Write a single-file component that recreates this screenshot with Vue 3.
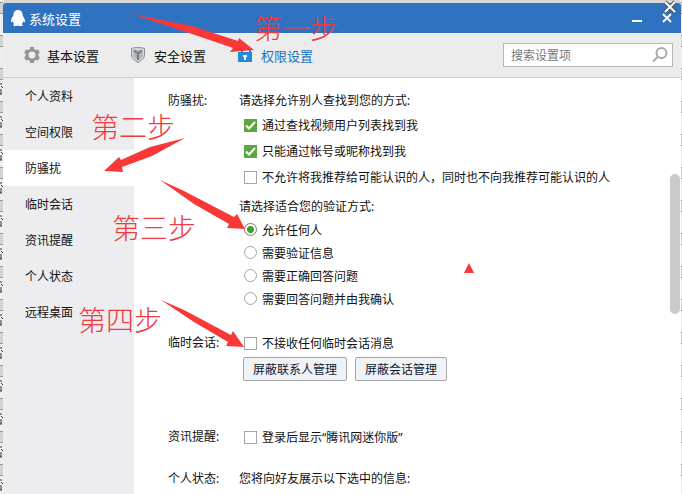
<template>
  <div class="desktop">
    <main class="window">
      <header class="titlebar">
        <svg class="logo" viewBox="0 0 16 18" aria-hidden="true">
          <path d="M8 1C4.800 1 3.400 3.300 3.400 6.200C2.500 7.900 .8 10.200 .9 12.600C1 13.900 1.900 13.200 2.600 12.300C2.900 13.500 3.500 14.300 4.200 14.900C3.300 15.200 2.900 16.500 4 16.900C5.400 17.300 7.200 17 8 16.400C8.800 17 10.600 17.300 12 16.900C13.100 16.500 12.700 15.200 11.800 14.900C12.500 14.300 13.100 13.500 13.400 12.300C14.100 13.200 15 13.900 15.100 12.600C15.200 10.200 13.500 7.900 12.600 6.200C12.600 3.300 11.200 1 8 1Z" />
        </svg>
        <h1 class="title">系统设置</h1>
        <button class="win-btn" type="button" aria-label="最小化">
          <svg viewBox="0 0 12 12"><path d="M1 9H11" stroke-width="2" /></svg>
        </button>
        <button class="win-btn" type="button" aria-label="关闭">
          <svg viewBox="0 0 12 12"><path d="M2 2L10 10M10 2L2 10" stroke-width="2" /></svg>
        </button>
      </header>

      <nav class="toolbar">
        <button class="tab" type="button">
          <svg class="tab-icon" viewBox="0 0 18 18" aria-hidden="true">
            <g fill="none" stroke="#8f9499">
              <circle cx="9" cy="9" r="5" stroke-width="3" />
              <path d="M9 1V4M9 14V17M2.100 5L4.600 6.500M13.400 11.500L15.900 13M2.100 13L4.600 11.500M13.400 6.500L15.900 5" stroke-width="4" />
            </g>
          </svg>
          基本设置
        </button>
        <button class="tab" type="button">
          <svg class="tab-icon" viewBox="0 0 18 18" aria-hidden="true">
            <path d="M1.500 2.500Q3.500 1.500 8 1.500Q12.500 1.500 14.500 2.500V9Q14.500 13 8 16.500Q1.500 13 1.500 9Z" fill="#d3d6d8" stroke="#8b8f93" />
            <path d="M3.500 4H12.500V9.500Q12 12 8 14.500Q4 12 3.500 9.500Z" fill="#b0b4b7" />
            <path d="M4 4.500L8 7.500L12 4.500M8 7.500V14" fill="none" stroke="#777c80" stroke-width="2" />
          </svg>
          安全设置
        </button>
        <button class="tab active" type="button">
          <svg class="tab-icon" viewBox="0 0 18 18" aria-hidden="true">
            <path d="M5 7V5Q5 2 9 2Q13 2 13 5V7" fill="none" stroke="#2389d8" stroke-width="2" />
            <rect x="1" y="6" width="14" height="10" fill="#2389d8" />
            <path d="M6 9H10V11H9V14H7V11H6Z" fill="#fff" />
          </svg>
          权限设置
        </button>
        <label class="search">
          <input v-model="keyword" type="text" placeholder="搜索设置项" aria-label="搜索设置项" />
          <svg viewBox="0 0 18 18" aria-hidden="true">
            <circle cx="10.500" cy="7" r="5" />
            <path d="M6.800 10.700L2 15.500" />
          </svg>
        </label>
      </nav>

      <div class="body">
        <aside class="sidebar">
          <button
            v-for="item in menu"
            :key="item"
            type="button"
            class="menu-item"
            :class="{ active: item === current }"
            @click="current = item"
          >
            {{ item }}
          </button>
        </aside>

        <div class="content">
          <section class="group">
            <h2 class="label">防骚扰:</h2>
            <div>
              <p class="hint">请选择允许别人查找到您的方式:</p>
              <label v-for="opt in findOptions" :key="opt.text" class="check">
                <input v-model="opt.checked" type="checkbox" />
                {{ opt.text }}
              </label>
              <p class="hint second">请选择适合您的验证方式:</p>
              <label v-for="way in verifyWays" :key="way" class="radio">
                <input v-model="verify" type="radio" name="verify" :value="way" />
                {{ way }}
              </label>
            </div>
          </section>

          <section class="group session">
            <h2 class="label">临时会话:</h2>
            <div>
              <label class="check">
                <input v-model="rejectTemp" type="checkbox" />
                不接收任何临时会话消息
              </label>
              <div class="buttons">
                <button class="btn" type="button">屏蔽联系人管理</button>
                <button class="btn" type="button">屏蔽会话管理</button>
              </div>
            </div>
          </section>

          <section class="group news">
            <h2 class="label">资讯提醒:</h2>
            <label class="check">
              <input v-model="showMini" type="checkbox" />
              登录后显示“腾讯网迷你版”
            </label>
          </section>

          <section class="group status">
            <h2 class="label">个人状态:</h2>
            <p class="hint">您将向好友展示以下选中的信息:</p>
          </section>
        </div>

        <div class="scroll-track"><div class="scroll-thumb"></div></div>
      </div>
    </main>

    <!-- red step marks and arrows drawn over the window -->
    <svg class="marks" width="682" height="494" viewBox="0 0 682 494">
      <g class="fragments">
        <path v-for="y in fragments" :key="y" :d="`M0 ${y}h2M1 ${y + 2}l2 2M0 ${y + 6}h2M1 ${y + 7}v3M0 ${y + 10}h2`" />
      </g>
      <polygon v-for="a in arrows" :key="a" :points="a" />
      <polygon points="469,263 474,273 464,273" />
      <text v-for="s in steps" :key="s.text" :x="s.x" :y="s.y">{{ s.text }}</text>
      <path class="cross-edge" d="M665 2L675 12M675 2L665 12" />
      <path class="cross" d="M665 2L675 12M675 2L665 12" />
    </svg>
  </div>
</template>

<script setup>
import { ref } from 'vue'

const keyword = ref('')

const menu = ['个人资料', '空间权限', '防骚扰', '临时会话', '资讯提醒', '个人状态', '远程桌面']
const current = ref('防骚扰')

const findOptions = ref([
  { text: '通过查找视频用户列表找到我', checked: true },
  { text: '只能通过帐号或昵称找到我', checked: true },
  { text: '不允许将我推荐给可能认识的人，同时也不向我推荐可能认识的人', checked: false }
])

const verifyWays = ['允许任何人', '需要验证信息', '需要正确回答问题', '需要回答问题并由我确认']
const verify = ref('允许任何人')

const rejectTemp = ref(false)
const showMini = ref(false)

const steps = [
  { text: '第一步', x: 254, y: 39 },
  { text: '第二步', x: 91, y: 138 },
  { text: '第三步', x: 112, y: 239 },
  { text: '第四步', x: 78, y: 331 }
]

const arrows = [
  '132,14 192,26 238,41 239,38 254,50 230,52 233,48 192,34',
  '185,138 150,147 121,160 119,157 104,171 123,172 122,167 152,156',
  '160,180 184,191 234,217 237,214 245,229 227,228 229,224 194,204',
  '161,300 184,310 231,335 233,331 244,347 226,346 228,342 194,322'
]

const fragments = [84, 117, 150, 183, 216, 249, 282, 315, 348, 381, 414, 447, 480]
</script>

<style>
body {
  margin: 0;
}
</style>

<style scoped>
.desktop {
  position: relative;
  box-sizing: border-box;
  display: flex;
  min-height: 100vh;
  padding: 3px 1px 0 3px;
  overflow: hidden;
  background: repeating-linear-gradient(#9a9a9a 0 1px, #d3d3d3 1px 11px, #9a9a9a 11px 12px, #eee 12px 33px);
  background-position: 0 2px;
  font-family: "Noto Sans", "Noto Sans CJK SC", sans-serif;
  font-size: 12px;
  color: #111;
}

.window {
  display: flex;
  flex: 1;
  flex-direction: column;
  background: #fff;
  box-shadow: 0 -3px 0 #d6d6d2;
  border-radius: 3px 3px 0 0;
  overflow: hidden;
}

button,
input {
  font: inherit;
  color: inherit;
}

h1,
h2,
p {
  margin: 0;
  font-size: 12px;
  font-weight: 400;
}

/* TITLE */
.titlebar {
  display: flex;
  align-items: center;
  height: 30px;
  padding: 0 8px 0 7px;
  background: #2f72c0;
  color: #fff;
}
.logo {
  width: 16px;
  height: 18px;
  margin-right: 3px;
  fill: #fff;
}
.titlebar .title {
  flex: 1;
  font-size: 13px;
}
.win-btn {
  display: flex;
  margin-left: 18px;
  padding: 0;
  border: 0;
  background: none;
}
.win-btn svg {
  width: 12px;
  height: 12px;
  fill: none;
  stroke: #fff;
}

/* TOOLBAR */
.toolbar {
  display: flex;
  align-items: center;
  height: 44px;
  padding: 0 8px 0 20px;
  border-bottom: 1px solid #d0d0d0;
  background: #ececec;
}
.tab {
  display: flex;
  align-items: center;
  gap: 6px;
  margin-right: 31px;
  padding: 0;
  border: 0;
  background: none;
  font-size: 13px;
  white-space: nowrap;
}
.tab.active {
  color: #1a74b8;
}
.tab-icon {
  width: 18px;
  height: 18px;
}
.search {
  display: flex;
  align-items: center;
  box-sizing: border-box;
  width: 170px;
  height: 24px;
  margin-left: auto;
  padding: 0 3px 0 7px;
  border: 1px solid #b8b8b8;
  background: #fff;
}
.search input {
  flex: 1;
  min-width: 0;
  padding: 0;
  border: 0;
  outline: none;
  background: none;
}
.search input::placeholder {
  color: #777;
}
.search svg {
  width: 18px;
  height: 18px;
  fill: none;
  stroke: #aaa;
  stroke-width: 2;
}

/* SIDEBAR */
.body {
  display: flex;
  flex: 1;
}
.sidebar {
  display: flex;
  flex-direction: column;
  flex-shrink: 0;
  width: 131px;
  background: #ededef;
}
.menu-item {
  height: 36px;
  padding: 0 0 0 22px;
  border: 0;
  background: none;
  text-align: left;
}
.menu-item.active {
  background: #fff;
}

/* CONTENT */
.content {
  flex: 1;
  padding: 12px 0 0 34px;
}
.group {
  display: grid;
  grid-template-columns: 71px 1fr;
  align-items: start;
}
.label,
.hint {
  line-height: 22px;
}
.hint.second {
  margin-top: 6px;
}
.session .label,
.news .label {
  line-height: 26px;
}
.check,
.radio {
  display: flex;
  align-items: center;
  gap: 5px;
  height: 26px;
  padding-left: 5px;
  white-space: nowrap;
}
.radio {
  height: 23px;
}
.check input,
.radio input {
  appearance: none;
  flex-shrink: 0;
  width: 13px;
  height: 13px;
  margin: 0;
  border: 1px solid #a5a5a5;
  background: #fff;
}
.check input:checked {
  border-color: #5aa83c;
  background: #5aa83c url("data:image/svg+xml,%3Csvg xmlns='http://www.w3.org/2000/svg' viewBox='0 0 11 11'%3E%3Cpath d='M1 5.500L4 8.500L10 2' fill='none' stroke='white' stroke-width='2'/%3E%3C/svg%3E");
}
.radio input {
  border-radius: 50%;
}
.radio input:checked {
  border-color: #777;
  background: radial-gradient(circle, #3fa02a 3px, #fff 4px);
}
.session {
  margin-top: 20px;
}
.news {
  margin-top: 43px;
}
.status {
  margin-top: 18px;
}
.buttons {
  display: flex;
  gap: 8px;
  padding: 1px 0 0 4px;
}
.btn {
  height: 24px;
  padding: 0 9px;
  border: 1px solid #a3a7ac;
  border-radius: 2px;
  background: #f1f2f4;
  color: #0b1c38;
  white-space: nowrap;
}

/* SCROLLBAR */
.scroll-track {
  width: 10px;
  margin-right: 1px;
  padding-top: 96px;
}
.scroll-thumb {
  height: 140px;
  border-radius: 5px;
  background: #cbcbcb;
}

/* MARKS */
.marks {
  position: absolute;
  top: 0;
  left: 0;
  pointer-events: none;
}
.marks polygon {
  fill: #f93838;
}
.marks text {
  fill: #ee3b41;
  font-family: "Noto Sans CJK SC", sans-serif;
  font-size: 28px;
  font-weight: 300;
}
.fragments {
  fill: none;
  stroke: #333;
}
.cross-edge,
.cross {
  fill: none;
  stroke: #555;
  stroke-width: 4;
}
.cross {
  stroke: #fff;
  stroke-width: 2;
}
</style>
